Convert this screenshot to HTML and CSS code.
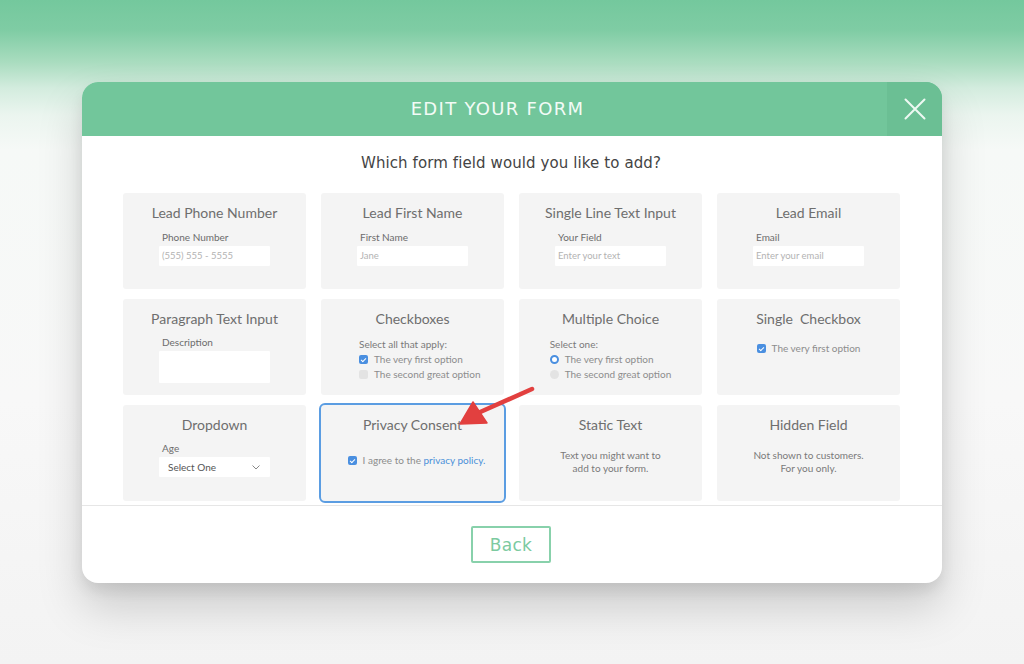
FILE: index.html
```html
<!DOCTYPE html>
<html lang="en">
<head>
<meta charset="utf-8">
<title>Edit your form</title>
<link rel="stylesheet" href="styles.css">
</head>
<body>
<div class="page">
  <div class="modal">
    <div class="modal-head">
      <h1 class="modal-title">EDIT YOUR FORM</h1>
      <button class="close" aria-label="Close">
        <svg width="22" height="22" viewBox="0 0 22 22"><path d="M1.5 1.5 L20.5 20.5 M20.5 1.5 L1.5 20.5" stroke="#eef9f3" stroke-width="2" stroke-linecap="round" fill="none"/></svg>
      </button>
    </div>
    <div class="modal-body">
      <p class="question">Which form field would you like to add?</p>
      <div class="grid">
        <div class="card">
          <div class="card-title">Lead Phone Number</div>
          <div class="field">
            <div class="label">Phone Number</div>
            <div class="input">(555) 555 - 5555</div>
          </div>
        </div>
        <div class="card">
          <div class="card-title">Lead First Name</div>
          <div class="field">
            <div class="label">First Name</div>
            <div class="input">Jane</div>
          </div>
        </div>
        <div class="card">
          <div class="card-title">Single Line Text Input</div>
          <div class="field">
            <div class="label">Your Field</div>
            <div class="input">Enter your text</div>
          </div>
        </div>
        <div class="card">
          <div class="card-title">Lead Email</div>
          <div class="field">
            <div class="label">Email</div>
            <div class="input">Enter your email</div>
          </div>
        </div>

        <div class="card">
          <div class="card-title">Paragraph Text Input</div>
          <div class="field field-tight">
            <div class="label">Description</div>
            <div class="input textarea"></div>
          </div>
        </div>
        <div class="card">
          <div class="card-title">Checkboxes</div>
          <div class="opts opts-left">
            <div class="opts-label">Select all that apply:</div>
            <div class="opt"><span class="cb on"></span>The very first option</div>
            <div class="opt"><span class="cb"></span>The second great option</div>
          </div>
        </div>
        <div class="card">
          <div class="card-title">Multiple Choice</div>
          <div class="opts">
            <div class="opts-label">Select one:</div>
            <div class="opt"><span class="radio on"></span>The very first option</div>
            <div class="opt"><span class="radio"></span>The second great option</div>
          </div>
        </div>
        <div class="card">
          <div class="card-title">Single&nbsp; Checkbox</div>
          <div class="opts opts-single">
            <div class="opt"><span class="cb on"></span>The very first option</div>
          </div>
        </div>

        <div class="card">
          <div class="card-title">Dropdown</div>
          <div class="field field-tight">
            <div class="label">Age</div>
            <div class="input select">
              <span>Select One</span>
              <svg width="8" height="5" viewBox="0 0 8 5"><path d="M0.5 0.5 L4 4 L7.5 0.5" stroke="#888" stroke-width="1" fill="none"/></svg>
            </div>
          </div>
        </div>
        <div class="card card-selected">
          <div class="card-title">Privacy Consent</div>
          <div class="opts opts-consent">
            <div class="opt"><span class="cb on"></span>I agree to the&nbsp;<span class="link">privacy policy.</span></div>
          </div>
        </div>
        <div class="card">
          <div class="card-title">Static Text</div>
          <p class="note">Text you might want to<br>add to your form.</p>
        </div>
        <div class="card">
          <div class="card-title">Hidden Field</div>
          <p class="note">Not shown to customers.<br>For you only.</p>
        </div>
      </div>
    </div>
    <div class="modal-foot">
      <button class="back">Back</button>
    </div>
  </div>

  <svg class="arrow" width="95" height="50" viewBox="0 0 95 50">
    <path d="M28 33 L82 9" stroke="#e2403f" stroke-width="4.5" stroke-linecap="round" fill="none"/>
    <path d="M10 44 L23 22 L37 43 Z" fill="#e2403f" stroke="#e2403f" stroke-width="1.5" stroke-linejoin="round"/>
  </svg>
</div>
</body>
</html>
```

FILE: styles.css
```css
* { box-sizing: border-box; }

html, body {
  margin: 0;
  padding: 0;
}

body {
  width: 1024px;
  height: 664px;
  overflow: hidden;
  background: linear-gradient(180deg, #74c89d 0px, #7fcca4 30px, #a9dcbf 62px, #d3ecde 88px, #ebf5ef 115px, #f6f9f7 150px, #f8f8f8 400px, #f3f3f3 664px);
  font-family: "Lato", "Noto Sans", sans-serif;
}

.page {
  position: relative;
  width: 1024px;
  height: 664px;
  padding-top: 82px;
}

.modal {
  width: 860px;
  margin: 0 auto;
  background: #ffffff;
  border-radius: 16px;
  box-shadow: 0 24px 45px rgba(0, 0, 0, 0.17), 0 8px 14px rgba(0, 0, 0, 0.08);
  overflow: hidden;
}

.modal-head {
  display: flex;
  height: 54px;
  background: #72c69b;
}

.modal-title {
  flex: 1;
  margin: 0;
  padding-left: 26px;
  text-align: center;
  line-height: 54px;
  font-family: "DejaVu Sans", Verdana, sans-serif;
  font-weight: normal;
  font-size: 18px;
  letter-spacing: 1.3px;
  color: #f2fbf6;
}

.close {
  width: 55px;
  height: 54px;
  border: 0;
  padding: 0;
  background: #6bbf94;
  display: flex;
  align-items: center;
  justify-content: center;
  cursor: pointer;
}

.modal-body {
  padding: 0 43px 4px 41px;
  border-bottom: 1px solid #e6e6e6;
}

.question {
  margin: 0;
  padding: 17px 0 0;
  height: 57px;
  line-height: 20px;
  text-align: center;
  font-family: "DejaVu Sans", Verdana, sans-serif;
  font-size: 15px;
  letter-spacing: 0.1px;
  color: #444444;
}

.grid {
  display: grid;
  grid-template-columns: repeat(4, 183px);
  grid-auto-rows: 96px;
  column-gap: 15px;
  row-gap: 10px;
}

.card {
  background: #f4f4f4;
  border-radius: 3px;
  padding-top: 11px;
  display: flex;
  flex-direction: column;
  align-items: center;
  color: #666;
}

.card-selected {
  outline: 2px solid #5b9de2;
  outline-offset: 0;
  border-radius: 4px;
}

.card-title {
  font-size: 14px;
  line-height: 18px;
  color: #6e6e6e;
  white-space: pre;
}

.field {
  width: 111px;
  margin-top: 9px;
}

.field-tight {
  margin-top: 8px;
}

.label {
  font-size: 10px;
  line-height: 12px;
  color: #6c6c6c;
  padding-left: 3px;
  margin-bottom: 3px;
}

.input {
  height: 20px;
  background: #ffffff;
  border-radius: 1px;
  font-size: 9.5px;
  line-height: 20px;
  padding-left: 3px;
  color: #b3b3b3;
}

.textarea {
  height: 32px;
}

.select {
  display: flex;
  align-items: center;
  justify-content: space-between;
  padding: 0 10px 0 9px;
  font-size: 10px;
  color: #555;
}

.opts {
  margin-top: 9px;
  font-size: 10px;
  line-height: 15px;
}

.opts-left {
  align-self: flex-start;
  margin-left: 38px;
}

.opts-single {
  margin-top: 13px;
}

.opts-consent {
  margin-top: 19px;
  margin-left: 8px;
}

.opts-label {
  color: #7a7a7a;
  line-height: 14px;
  margin-bottom: 1px;
}

.opt {
  display: flex;
  align-items: center;
  color: #8d8d8d;
}

.cb {
  width: 9px;
  height: 9px;
  margin-right: 6px;
  border-radius: 2px;
  background: #e3e3e3;
  position: relative;
  flex: none;
}

.cb.on {
  background: #4a8fe0;
}

.cb.on::after {
  content: "";
  position: absolute;
  left: 3px;
  top: 1.5px;
  width: 2px;
  height: 4px;
  border: solid #ffffff;
  border-width: 0 1px 1px 0;
  transform: rotate(45deg);
}

.radio {
  width: 9px;
  height: 9px;
  margin-right: 6px;
  border-radius: 50%;
  background: #e3e3e3;
  flex: none;
}

.radio.on {
  background: #ffffff;
  border: 2.5px solid #4a8fe0;
}

.link {
  color: #4a90d9;
}

.note {
  margin: 15px 0 0;
  font-size: 10px;
  line-height: 13px;
  text-align: center;
  color: #7a7a7a;
}

.modal-foot {
  height: 77px;
  display: flex;
  align-items: center;
  justify-content: center;
}

.back {
  width: 80px;
  height: 37px;
  margin-left: -2px;
  background: #ffffff;
  border: 2px solid #88d1ab;
  border-radius: 2px;
  font-family: "DejaVu Sans", Verdana, sans-serif;
  font-size: 17px;
  letter-spacing: 0.3px;
  color: #7ccaa0;
  cursor: pointer;
}

.arrow {
  position: absolute;
  left: 450px;
  top: 380px;
}
```
